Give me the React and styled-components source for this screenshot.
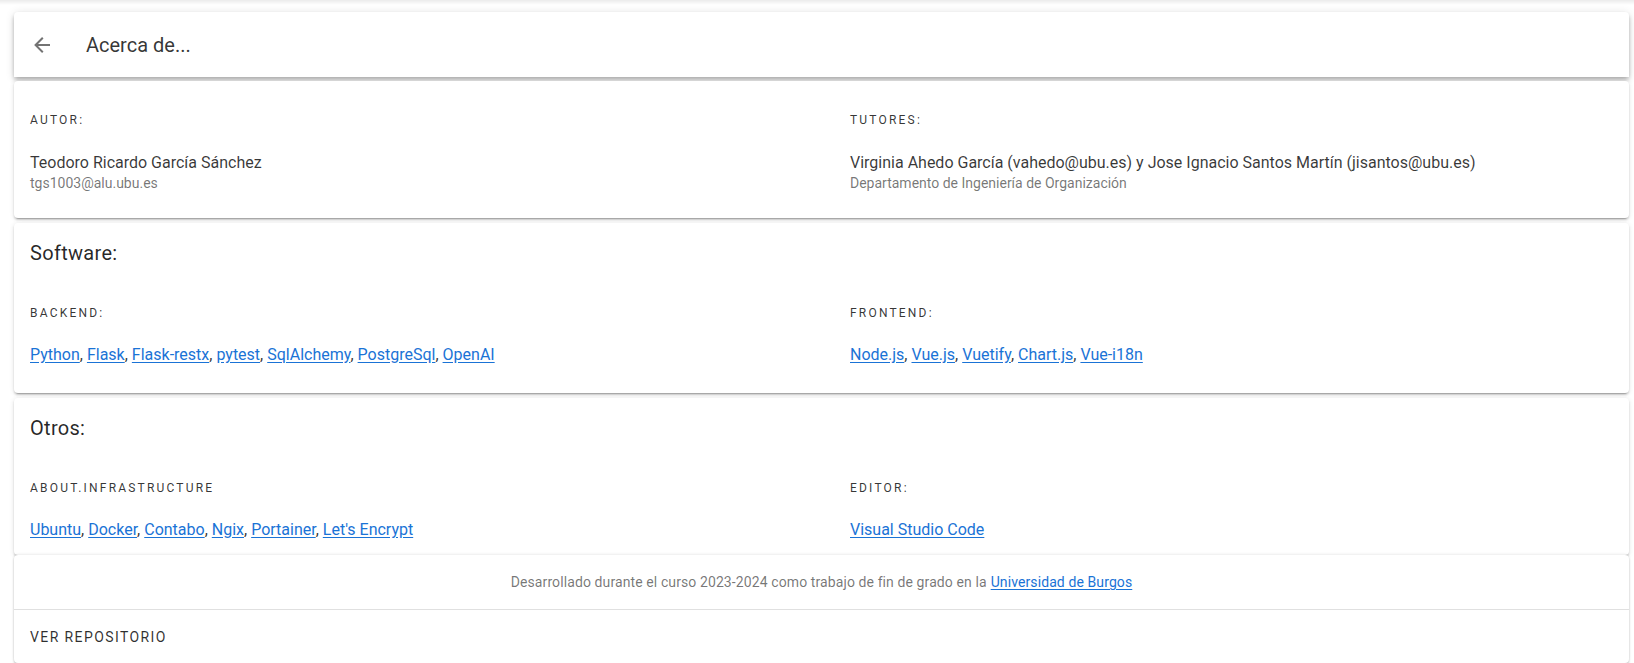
import React from 'react';
import styled, { createGlobalStyle } from 'styled-components';

const GlobalStyle = createGlobalStyle`
    html, body {
        margin: 0;
        padding: 0;
        background: #ffffff;
        overflow: hidden;
    }
    body {
        font-family: Roboto, "Liberation Sans", sans-serif;
        color: rgba(0, 0, 0, 0.8);
    }
`;

const Page = styled.div`
    position: relative;
    padding: 12px 5px 0 14px;
`;

const TopShade = styled.div`
    position: absolute;
    top: 0;
    left: 0;
    right: 0;
    height: 5px;
    background: linear-gradient(to bottom, rgba(0, 0, 0, 0.08), rgba(0, 0, 0, 0));
`;

const Card = styled.section`
    background: #ffffff;
    border-radius: 4px;
    box-shadow: 0 3px 1px -2px rgba(0, 0, 0, 0.2), 0 2px 2px 0 rgba(0, 0, 0, 0.14), 0 1px 5px 0 rgba(0, 0, 0, 0.12);
    margin-top: ${props => props.gap || '0px'};
    padding: ${props => props.pad || '0'};
`;

const Toolbar = styled(Card)`
    height: 65px;
    display: flex;
    align-items: center;
    box-shadow: 0 2px 4px -1px rgba(0, 0, 0, 0.2), 0 4px 5px 0 rgba(0, 0, 0, 0.14), 0 1px 10px 0 rgba(0, 0, 0, 0.12);
    border-radius: 4px 4px 0 0;
`;

const BackButton = styled.button`
    width: 48px;
    height: 48px;
    margin-left: 4px;
    display: flex;
    align-items: center;
    justify-content: center;
    border: none;
    background: transparent;
    padding: 0;
    color: rgba(0, 0, 0, 0.55);
    cursor: pointer;
`;

const ToolbarTitle = styled.h1`
    margin: 0 0 0 20px;
    font-size: 20px;
    font-weight: 400;
    line-height: 28px;
    color: rgba(0, 0, 0, 0.8);
`;

const CardTitle = styled.h2`
    margin: 0;
    font-size: 20px;
    font-weight: 400;
    letter-spacing: 0.3px;
    line-height: 32px;
    color: rgba(0, 0, 0, 0.85);
`;

const Columns = styled.div`
    display: grid;
    grid-template-columns: 820px 1fr;
    margin-top: ${props => props.top || '0px'};
`;

const Column = styled.div`
    display: flex;
    flex-direction: column;
`;

const Overline = styled.div`
    font-size: 12px;
    font-weight: 400;
    letter-spacing: 2.2px;
    line-height: 20px;
    text-transform: uppercase;
    color: rgba(0, 0, 0, 0.8);
    margin-bottom: ${props => props.space};
`;

const Name = styled.div`
    font-size: 16px;
    line-height: 20px;
    color: rgba(0, 0, 0, 0.78);
`;

const Sub = styled.div`
    font-size: 14px;
    line-height: 20px;
    color: rgba(0, 0, 0, 0.55);
`;

const LinkLine = styled.div`
    font-size: 16px;
    line-height: 24px;
    color: rgba(0, 0, 0, 0.8);
`;

const Link = styled.a`
    color: #1a73d6;
    text-decoration: underline;
    text-underline-offset: 2px;
`;

const Footer = styled(Card)`
    border-radius: 4px;
    box-shadow: 0 -1px 3px 0 rgba(0, 0, 0, 0.06), 0 2px 2px 0 rgba(0, 0, 0, 0.14), 0 1px 3px 0 rgba(0, 0, 0, 0.12);
`;

const FooterText = styled.p`
    margin: 0;
    height: 54px;
    display: flex;
    align-items: center;
    justify-content: center;
    font-size: 14px;
    letter-spacing: 0.1px;
    color: rgba(0, 0, 0, 0.55);
    border-bottom: 1px solid rgba(0, 0, 0, 0.12);

    a {
        margin-left: 4px;
        font-size: 14px;
    }
`;

const Actions = styled.div`
    display: flex;
    align-items: center;
    padding: 8px;
    height: 53px;
    box-sizing: border-box;
`;

const TextButton = styled.button`
    height: 36px;
    padding: 0 8px;
    border: none;
    background: transparent;
    font-family: Roboto, "Liberation Sans", sans-serif;
    font-size: 14px;
    font-weight: 400;
    letter-spacing: 1.4px;
    text-transform: uppercase;
    color: rgba(0, 0, 0, 0.82);
    cursor: pointer;
`;

const ArrowLeft = () => (
    <svg width="24" height="24" viewBox="0 0 24 24" fill="currentColor">
        <path d="M20,11V13H8L13.5,18.5L12.08,19.92L4.16,12L12.08,4.08L13.5,5.5L8,11H20Z" />
    </svg>
);

const LinkList = ({ items }) => (
    <LinkLine>
        {items.map((item, i) => (
            <React.Fragment key={item}>
                <Link href="#">{item}</Link>
                {i < items.length - 1 ? ', ' : ''}
            </React.Fragment>
        ))}
    </LinkLine>
);

const Section = ({ title, left, right, gap }) => (
    <Card gap={gap} pad="14px 16px 26px 16px">
        <CardTitle>{title}</CardTitle>
        <Columns top="34px">
            <Column>
                <Overline space="20px">{left.label}</Overline>
                <LinkList items={left.items} />
            </Column>
            <Column>
                <Overline space="20px">{right.label}</Overline>
                <LinkList items={right.items} />
            </Column>
        </Columns>
    </Card>
);

const App = () => {
    return (
        <Page>
            <GlobalStyle />
            <TopShade />
            <Toolbar as="header">
                <BackButton aria-label="Volver">
                    <ArrowLeft />
                </BackButton>
                <ToolbarTitle>Acerca de...</ToolbarTitle>
            </Toolbar>

            <Card gap="4px" pad="29px 16px 25px 16px">
                <Columns>
                    <Column>
                        <Overline space="23px">Autor:</Overline>
                        <Name>Teodoro Ricardo García Sánchez</Name>
                        <Sub>tgs1003@alu.ubu.es</Sub>
                    </Column>
                    <Column>
                        <Overline space="23px">Tutores:</Overline>
                        <Name>Virginia Ahedo García (vahedo@ubu.es) y Jose Ignacio Santos Martín (jisantos@ubu.es)</Name>
                        <Sub>Departamento de Ingeniería de Organización</Sub>
                    </Column>
                </Columns>
            </Card>

            <Section
                gap="5px"
                title="Software:"
                left={{ label: 'Backend:', items: ['Python', 'Flask', 'Flask-restx', 'pytest', 'SqlAlchemy', 'PostgreSql', 'OpenAI'] }}
                right={{ label: 'Frontend:', items: ['Node.js', 'Vue.js', 'Vuetify', 'Chart.js', 'Vue-i18n'] }}
            />

            <Card gap="5px" pad="14px 16px 13px 16px">
                <CardTitle>Otros:</CardTitle>
                <Columns top="34px">
                    <Column>
                        <Overline space="20px">about.infrastructure</Overline>
                        <LinkList items={['Ubuntu', 'Docker', 'Contabo', 'Ngix', 'Portainer', "Let's Encrypt"]} />
                    </Column>
                    <Column>
                        <Overline space="20px">Editor:</Overline>
                        <LinkList items={['Visual Studio Code']} />
                    </Column>
                </Columns>
            </Card>

            <Footer as="footer">
                <FooterText>
                    Desarrollado durante el curso 2023-2024 como trabajo de fin de grado en la
                    <Link href="#">Universidad de Burgos</Link>
                </FooterText>
                <Actions>
                    <TextButton>Ver repositorio</TextButton>
                </Actions>
            </Footer>
        </Page>
    );
};

export default App;
